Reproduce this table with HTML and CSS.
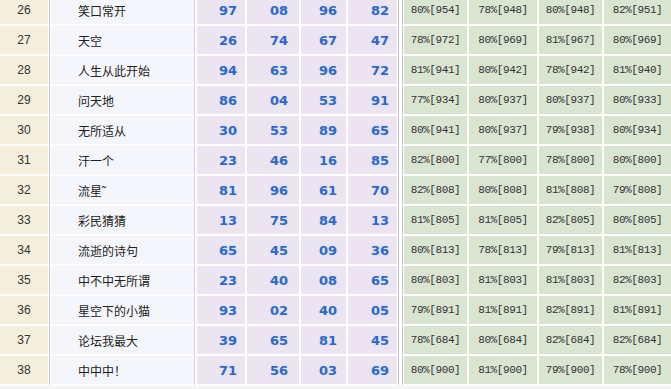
FILE: index.html
```html
<!DOCTYPE html>
<html lang="zh">
<head>
<meta charset="utf-8">
<title>统计</title>
<link rel="stylesheet" href="styles.css">
</head>
<body>
<table class="stats">
<tbody>
<tr><td class="c1">26</td><td class="c2">笑口常开</td><td class="n c3">97</td><td class="n c4">08</td><td class="n c5">96</td><td class="n c6">82</td><td class="sep"></td><td class="p c7">80%[954]</td><td class="p c8">78%[948]</td><td class="p c9">80%[948]</td><td class="p c10">82%[951]</td></tr>
<tr><td class="c1">27</td><td class="c2">天空</td><td class="n c3">26</td><td class="n c4">74</td><td class="n c5">67</td><td class="n c6">47</td><td class="sep"></td><td class="p c7">78%[972]</td><td class="p c8">80%[969]</td><td class="p c9">81%[967]</td><td class="p c10">80%[969]</td></tr>
<tr><td class="c1">28</td><td class="c2">人生从此开始</td><td class="n c3">94</td><td class="n c4">63</td><td class="n c5">96</td><td class="n c6">72</td><td class="sep"></td><td class="p c7">81%[941]</td><td class="p c8">80%[942]</td><td class="p c9">78%[942]</td><td class="p c10">81%[940]</td></tr>
<tr><td class="c1">29</td><td class="c2">问天地</td><td class="n c3">86</td><td class="n c4">04</td><td class="n c5">53</td><td class="n c6">91</td><td class="sep"></td><td class="p c7">77%[934]</td><td class="p c8">80%[937]</td><td class="p c9">80%[937]</td><td class="p c10">80%[933]</td></tr>
<tr><td class="c1">30</td><td class="c2">无所适从</td><td class="n c3">30</td><td class="n c4">53</td><td class="n c5">89</td><td class="n c6">65</td><td class="sep"></td><td class="p c7">80%[941]</td><td class="p c8">80%[937]</td><td class="p c9">79%[938]</td><td class="p c10">80%[934]</td></tr>
<tr><td class="c1">31</td><td class="c2">汗一个</td><td class="n c3">23</td><td class="n c4">46</td><td class="n c5">16</td><td class="n c6">85</td><td class="sep"></td><td class="p c7">82%[800]</td><td class="p c8">77%[800]</td><td class="p c9">78%[800]</td><td class="p c10">80%[800]</td></tr>
<tr><td class="c1">32</td><td class="c2">流星˜</td><td class="n c3">81</td><td class="n c4">96</td><td class="n c5">61</td><td class="n c6">70</td><td class="sep"></td><td class="p c7">82%[808]</td><td class="p c8">80%[808]</td><td class="p c9">81%[808]</td><td class="p c10">79%[808]</td></tr>
<tr><td class="c1">33</td><td class="c2">彩民猜猜</td><td class="n c3">13</td><td class="n c4">75</td><td class="n c5">84</td><td class="n c6">13</td><td class="sep"></td><td class="p c7">81%[805]</td><td class="p c8">81%[805]</td><td class="p c9">82%[805]</td><td class="p c10">80%[805]</td></tr>
<tr><td class="c1">34</td><td class="c2">流逝的诗句</td><td class="n c3">65</td><td class="n c4">45</td><td class="n c5">09</td><td class="n c6">36</td><td class="sep"></td><td class="p c7">80%[813]</td><td class="p c8">78%[813]</td><td class="p c9">79%[813]</td><td class="p c10">81%[813]</td></tr>
<tr><td class="c1">35</td><td class="c2">中不中无所谓</td><td class="n c3">23</td><td class="n c4">40</td><td class="n c5">08</td><td class="n c6">65</td><td class="sep"></td><td class="p c7">80%[803]</td><td class="p c8">81%[803]</td><td class="p c9">81%[803]</td><td class="p c10">82%[803]</td></tr>
<tr><td class="c1">36</td><td class="c2">星空下的小猫</td><td class="n c3">93</td><td class="n c4">02</td><td class="n c5">40</td><td class="n c6">05</td><td class="sep"></td><td class="p c7">79%[891]</td><td class="p c8">81%[891]</td><td class="p c9">82%[891]</td><td class="p c10">81%[891]</td></tr>
<tr><td class="c1">37</td><td class="c2">论坛我最大</td><td class="n c3">39</td><td class="n c4">65</td><td class="n c5">81</td><td class="n c6">45</td><td class="sep"></td><td class="p c7">78%[684]</td><td class="p c8">80%[684]</td><td class="p c9">82%[684]</td><td class="p c10">82%[684]</td></tr>
<tr><td class="c1">38</td><td class="c2">中中中！</td><td class="n c3">71</td><td class="n c4">56</td><td class="n c5">03</td><td class="n c6">69</td><td class="sep"></td><td class="p c7">80%[900]</td><td class="p c8">81%[900]</td><td class="p c9">79%[900]</td><td class="p c10">78%[900]</td></tr>
</tbody>
</table>
</body>
</html>
```
FILE: styles.css
```css
html, body {
  margin: 0;
  padding: 0;
  background: #f4f4f4;
  overflow: hidden;
}
.stats {
  width: 671px;
  margin-top: -4px;
  table-layout: fixed;
  border-collapse: separate;
  border-spacing: 0;
}
.stats td {
  box-sizing: border-box;
  height: 30px;
  padding: 0;
  border-bottom: 2px solid #fff;
  vertical-align: middle;
  white-space: nowrap;
  overflow: hidden;
}
.c1 {
  width: 49px;
  background: #f4efdc;
  border-right: 1px solid #fff;
  text-align: center;
  font-family: "Liberation Sans", Arial, sans-serif;
  font-size: 12px;
  color: #333;
}
.c2 {
  width: 146px;
  background: #f5f6fb;
  border-left: 1px solid #c9c9c9;
  border-right: 1px solid #d8cde2;
  box-shadow: inset 1px 0 0 #fff;
  padding-left: 28px !important;
  font-family: "Noto Sans CJK SC", sans-serif;
  font-size: 12px;
  color: #222;
}
.n {
  background: #ece4f0;
  border-right: 2px solid #fff;
  text-align: right;
  padding-right: 8px !important;
  font-family: "DejaVu Sans", Verdana, sans-serif;
  font-weight: bold;
  font-size: 13px;
  color: #3168c6;
  text-shadow: 0 0 2px #c6dcff, 0 0 1px #e4eeff;
}
.c3 { width: 52px; border-left: 2px solid #fff; }
.c4 { width: 54px; padding-right: 11px !important; }
.c5 { width: 47px; padding-right: 9px !important; }
.c6 { width: 50px; border-right-width: 1px !important; }
.sep {
  width: 5px;
  background: #fff;
  border-left: 1px solid #c4c4c4;
  border-right: 1px solid #c4c4c4;
}
.p {
  background: #d9e4d1;
  border-right: 2px solid #fff;
  text-align: center;
  font-family: "Liberation Mono", "DejaVu Sans Mono", monospace;
  font-size: 11px;
  letter-spacing: -0.4px;
  color: #333;
}
.c7 { width: 66px; border-left: 1px solid #fff; }
.c8 { width: 70px; }
.c9 { width: 65px; }
.c10 { width: 67px; border-right: 0 !important; }
```
